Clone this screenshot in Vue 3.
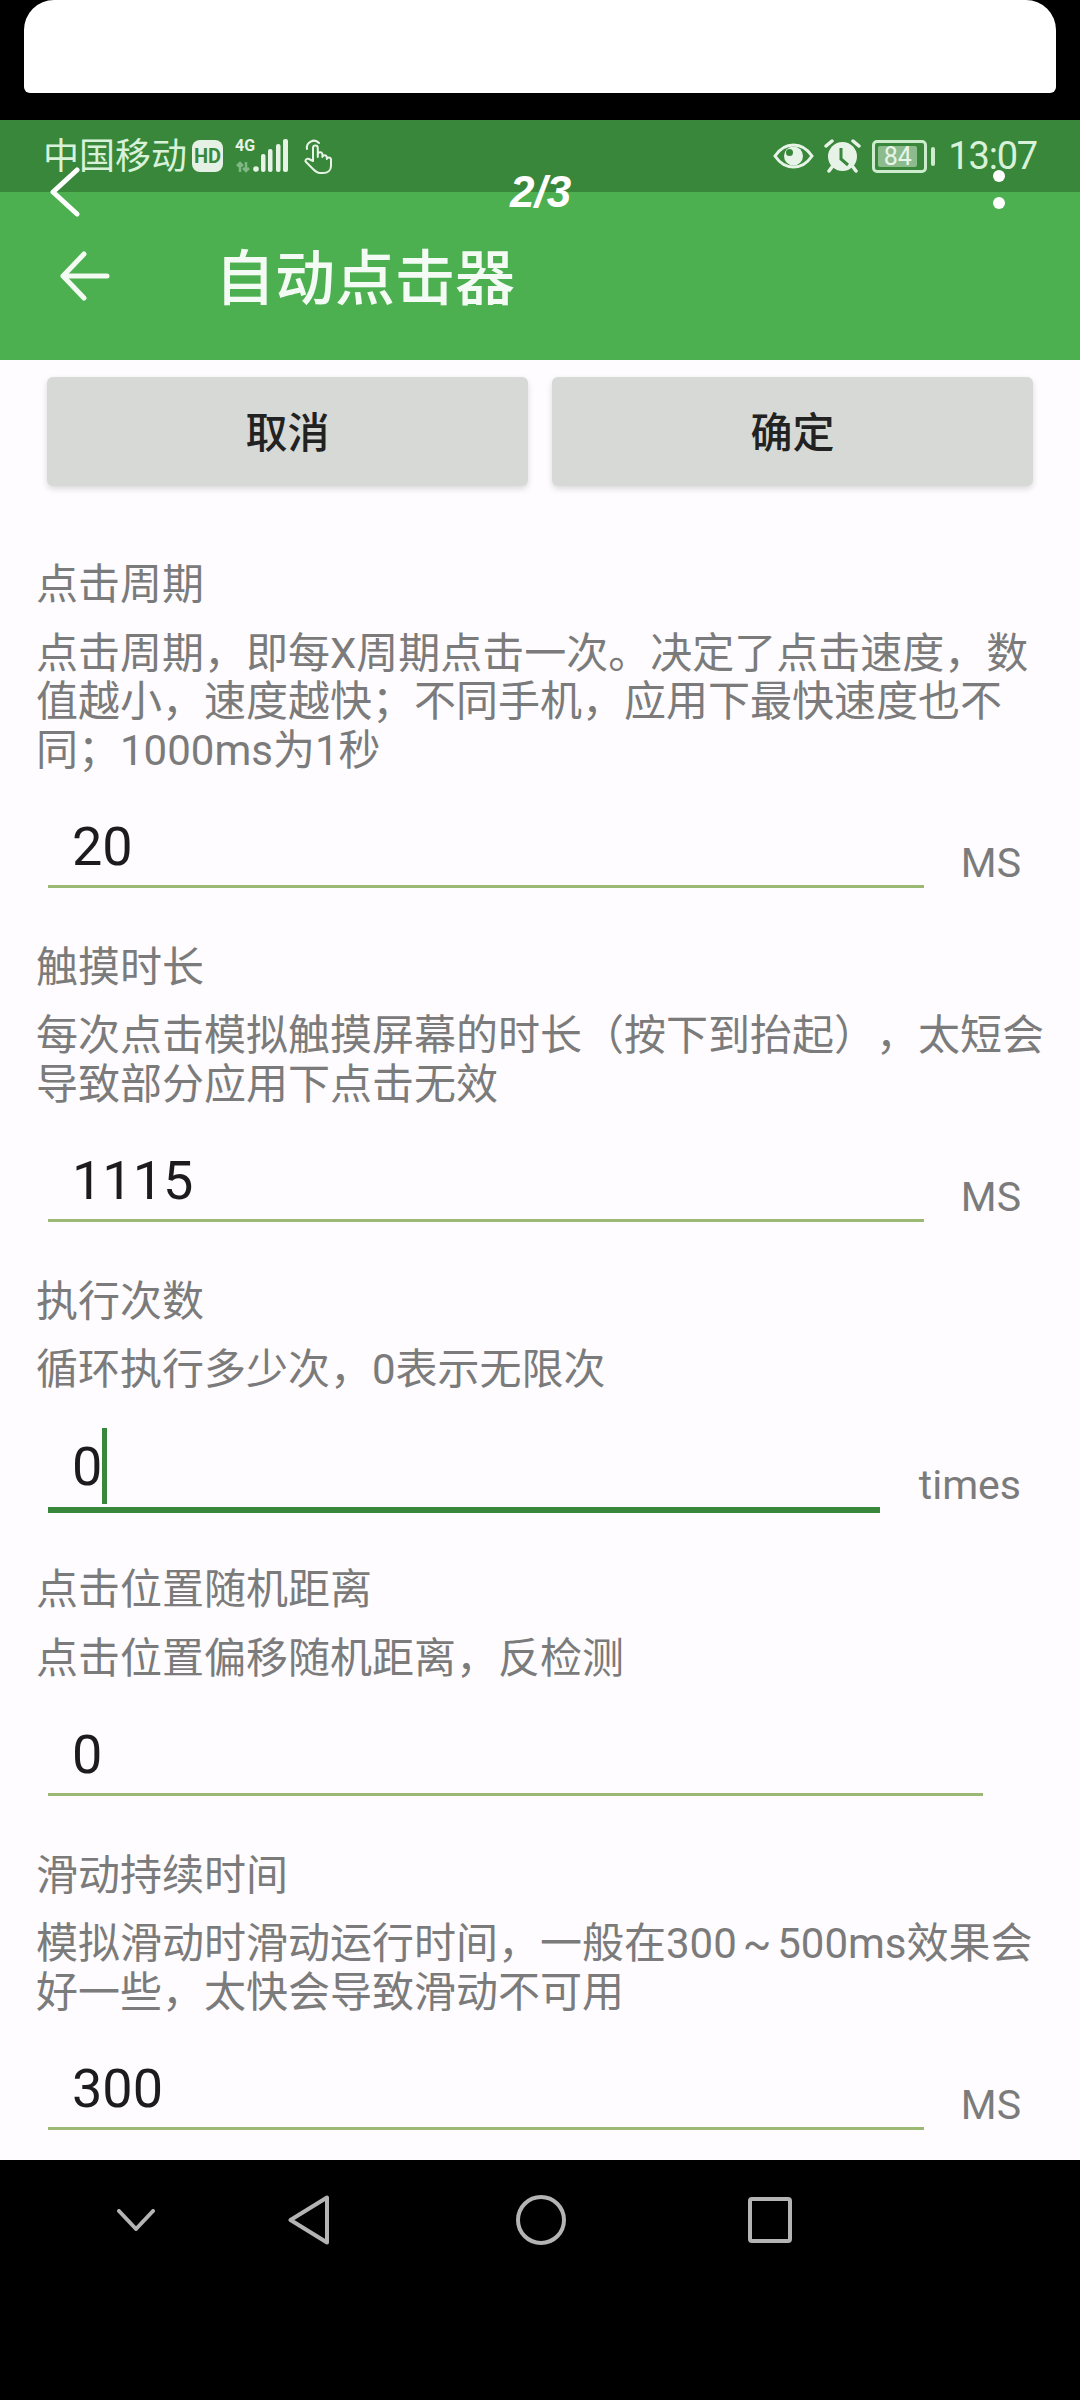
<template>
  <div class="screen">
    <div class="top-card"></div>

    <div class="phone">
      <div class="status-bar">
        <div class="status-left">
          <span class="carrier">中国移动</span>
          <span class="hd">HD</span>
          <div class="signal">
            <span class="net">4G</span>
            <svg class="bars" width="54" height="34" viewBox="0 0 54 34">
              <path d="M5 33v-9M2 27l3-3 3 3M11 23v9M8 29l3 3 3-3" fill="none" stroke="#7fb884" stroke-width="2.500" />
              <circle cx="21" cy="30" r="2.800" fill="#e6f3e6" />
              <rect x="26" y="15" width="4.500" height="18" rx="2" fill="#e6f3e6" />
              <rect x="33" y="10" width="4.500" height="23" rx="2" fill="#e6f3e6" />
              <rect x="41" y="5" width="4.500" height="28" rx="2" fill="#e6f3e6" />
              <rect x="48" y="0" width="5" height="33" rx="2" fill="#e6f3e6" />
            </svg>
          </div>
          <svg class="hand" width="30" height="38" viewBox="0 0 30 38" fill="none" stroke="#e6f3e6" stroke-width="2" stroke-linecap="round" stroke-linejoin="round">
            <path d="M4 12a7 7 0 0 1 12-6" />
            <path d="M10 24V11a2.400 2.400 0 0 1 4.800 0v9l0-3a2.400 2.400 0 0 1 4.600 0v3a2.300 2.300 0 0 1 4.400 0v2a2.200 2.200 0 0 1 4.200 0v7c0 4-3 7-8 7h-3c-3 0-5-2-7-4l-7-7c-1.600-2 1-4 3-3z" />
          </svg>
        </div>
        <div class="status-right">
          <svg width="41" height="26" viewBox="0 0 41 26">
            <path d="M2 13C7 5.500 13 2 20.500 2S34 5.500 39 13C34 20.500 28 24 20.500 24S7 20.500 2 13z" fill="none" stroke="#e6f3e6" stroke-width="3" />
            <circle cx="20.500" cy="13" r="9.500" fill="#e6f3e6" />
            <circle cx="16.500" cy="9.500" r="3.500" fill="#38873a" />
          </svg>
          <svg class="alarm" width="37" height="34" viewBox="0 0 37 34">
            <circle cx="18.500" cy="17.500" r="14.500" fill="#e6f3e6" />
            <path d="M17 9v11l7 6" fill="none" stroke="#38873a" stroke-width="3" />
            <path d="M2 7l6-5M35 7l-6-5" stroke="#e6f3e6" stroke-width="3.500" stroke-linecap="round" />
            <path d="M8 28l-3 4M29 28l3 4" stroke="#e6f3e6" stroke-width="3.500" stroke-linecap="round" />
          </svg>
          <div class="battery">
            <div class="battery-body"><span class="battery-num">84</span></div>
            <div class="battery-nub"></div>
          </div>
          <span class="clock">13:07</span>
        </div>
      </div>

      <div class="app-bar">
        <svg class="arrow" width="50" height="50" viewBox="0 0 50 50" fill="none" stroke="#f2faf2" stroke-width="5" stroke-linecap="round" stroke-linejoin="round">
          <path d="M47 25H3M24 3L3 25l21 22" />
        </svg>
        <h1 class="app-title">自动点击器</h1>
      </div>

      <div class="content">
        <div class="actions">
          <div class="action">取消</div>
          <div class="action">确定</div>
        </div>

        <div v-for="item in settings" :key="item.title" class="setting">
          <div class="setting-title">{{ item.title }}</div>
          <p class="setting-desc">{{ item.desc }}</p>
          <div class="input-row">
            <div class="field" :class="{ focused: item.focused }" :style="{ width: item.width + 'px' }">
              <span class="value">{{ item.value }}</span>
              <span v-if="item.focused" class="caret"></span>
            </div>
            <span v-if="item.unit" class="unit">{{ item.unit }}</span>
          </div>
        </div>
      </div>

      <div class="nav-bar">
        <svg class="nav-chevron" width="38" height="22" viewBox="0 0 38 22" fill="none" stroke="#b4b4b4" stroke-width="4" stroke-linecap="round" stroke-linejoin="round">
          <path d="M2 2l17 18L36 2" />
        </svg>
        <svg class="nav-back" width="42" height="50" viewBox="0 0 42 50" fill="none" stroke="#b4b4b4" stroke-width="4" stroke-linejoin="round">
          <path d="M39 2.500v45L2.500 25z" />
        </svg>
        <svg class="nav-home" width="50" height="50" viewBox="0 0 50 50" fill="none" stroke="#b4b4b4" stroke-width="4">
          <circle cx="25" cy="25" r="23" />
        </svg>
        <svg class="nav-recent" width="44" height="46" viewBox="0 0 44 46" fill="none" stroke="#b4b4b4" stroke-width="4" stroke-linejoin="round">
          <rect x="2" y="2" width="40" height="42" rx="2" />
        </svg>
      </div>
    </div>

    <!-- viewer controls lying over the screenshot -->
    <svg class="viewer-back" width="30" height="50" viewBox="0 0 30 50" fill="none" stroke="#fff" stroke-width="5" stroke-linecap="round" stroke-linejoin="round">
      <path d="M27 3L3 25l24 22" />
    </svg>
    <span class="viewer-count">2/3</span>
    <div class="viewer-dots">
      <span></span>
      <span></span>
    </div>
  </div>
</template>

<script setup>
const settings = [
  {
    title: '点击周期',
    desc: '点击周期，即每X周期点击一次。决定了点击速度，数值越小，速度越快；不同手机，应用下最快速度也不同；1000ms为1秒',
    value: '20',
    unit: 'MS',
    width: 876
  },
  {
    title: '触摸时长',
    desc: '每次点击模拟触摸屏幕的时长（按下到抬起），太短会导致部分应用下点击无效',
    value: '1115',
    unit: 'MS',
    width: 876
  },
  {
    title: '执行次数',
    desc: '循环执行多少次，0表示无限次',
    value: '0',
    unit: 'times',
    width: 832,
    focused: true
  },
  {
    title: '点击位置随机距离',
    desc: '点击位置偏移随机距离，反检测',
    value: '0',
    width: 935
  },
  {
    title: '滑动持续时间',
    desc: '模拟滑动时滑动运行时间，一般在300 ~ 500ms效果会好一些，太快会导致滑动不可用',
    value: '300',
    unit: 'MS',
    width: 876
  }
]
</script>

<style>
html,
body {
  margin: 0;
  background: #000;
}
</style>

<style scoped>
.screen {
  position: relative;
  width: 1080px;
  height: 2400px;
  background: #000;
  overflow: hidden;
  font-family: Roboto, 'Noto Sans CJK SC', sans-serif;
  text-spacing-trim: space-all;
}

.top-card {
  height: 93px;
  margin: 0 24px 27px;
  background: #fff;
  border-radius: 30px 30px 6px 6px;
}

.status-bar {
  height: 72px;
  background: #38873a;
  display: flex;
  justify-content: space-between;
  align-items: center;
  padding: 0 43px 0 43px;
  box-sizing: border-box;
}

.status-left,
.status-right {
  display: flex;
  align-items: center;
}

.carrier {
  margin-top: 2px;
  font-size: 36px;
  line-height: 40px;
  color: #d8f2d9;
}

.hd {
  width: 31px;
  height: 32px;
  margin-left: 5px;
  border-radius: 8px;
  background: #e6f1e6;
  color: #38873a;
  font-size: 20px;
  font-weight: 700;
  line-height: 32px;
  text-align: center;
}

.signal {
  position: relative;
  width: 54px;
  height: 34px;
  margin-left: 12px;
}

.net {
  position: absolute;
  left: 0;
  top: -1px;
  font-size: 16px;
  font-weight: 700;
  line-height: 16px;
  color: #e6f3e6;
}

.bars {
  display: block;
}

.hand {
  margin-left: 14px;
}

.alarm {
  margin-left: 10px;
}

.battery {
  display: flex;
  align-items: center;
  margin-left: 11px;
}

.battery-body {
  width: 55px;
  height: 33px;
  box-sizing: border-box;
  border: 3px solid #cdeccd;
  border-radius: 5px;
  padding: 3px;
  display: flex;
}

.battery-num {
  width: 39px;
  background: #8cbc8e;
  border-radius: 2px;
  color: #e8f5e8;
  font-size: 25px;
  line-height: 21px;
  text-align: center;
}

.battery-nub {
  width: 4px;
  height: 19px;
  margin-left: 4px;
  border-radius: 2px;
  background: #cdeccd;
}

.clock {
  margin-left: 13px;
  font-size: 38px;
  line-height: 40px;
  letter-spacing: -1.200px;
  color: #d8f2d9;
}

.app-bar {
  height: 168px;
  background: #4caf50;
  display: flex;
  align-items: center;
  padding-left: 60px;
  box-sizing: border-box;
}

.app-title {
  margin: 7px 0 0 105px;
  font-size: 60px;
  font-weight: 500;
  line-height: 70px;
  color: #f4fbf4;
}

.content {
  height: 1800px;
  overflow: hidden;
  background: #fefcff;
  padding: 17px 36px 0;
  box-sizing: border-box;
}

.actions {
  display: flex;
  gap: 24px;
  padding: 0 11px;
  margin-bottom: 73px;
}

.action {
  flex: 1;
  height: 109px;
  background: #d6d9d6;
  border-radius: 6px;
  box-shadow: 0 3px 6px rgba(0, 0, 0, 0.14);
  color: #222;
  font-size: 42px;
  font-weight: 500;
  line-height: 114px;
  text-align: center;
}

.setting {
  margin-bottom: 54px;
}

.setting-title {
  font-size: 42px;
  line-height: 51px;
  color: #7b7b7b;
}

.setting-desc {
  margin: 19.500px 0 0;
  font-size: 42px;
  line-height: 48.500px;
  word-spacing: -4.500px;
  color: #7b7b7b;
}

.input-row {
  display: flex;
  justify-content: space-between;
  align-items: flex-end;
  margin-left: 12px;
  padding-right: 23px;
}

.field {
  display: flex;
  align-items: flex-start;
  padding: 40px 0 5.500px 24px;
  box-sizing: border-box;
  border-bottom: 3px solid #9bb974;
}

.field.focused {
  padding-bottom: 8.500px;
  margin-bottom: -3px;
  border-bottom: 6px solid #38873a;
}

.value {
  font-size: 54px;
  line-height: 64px;
  color: #1c1c1c;
}

.caret {
  width: 5px;
  height: 76px;
  margin: -7px 0 -12px 0;
  background: #38873a;
}

.unit {
  margin-bottom: 1px;
  font-size: 41px;
  line-height: 48px;
  color: #7b7b7b;
}

.nav-bar {
  height: 240px;
  background: #000;
  display: flex;
  align-items: flex-start;
  padding: 35px 0 0 117px;
  box-sizing: border-box;
}

.nav-chevron {
  margin-top: 14px;
}

.nav-back {
  margin-left: 133px;
}

.nav-home {
  margin-left: 186px;
}

.nav-recent {
  margin: 2px 0 0 182px;
}

.viewer-back {
  position: absolute;
  left: 50px;
  top: 167px;
}

.viewer-count {
  position: absolute;
  left: 510px;
  top: 168px;
  font-family: 'Liberation Sans', sans-serif;
  font-size: 44px;
  font-style: italic;
  font-weight: 700;
  line-height: 48px;
  color: #fff;
}

.viewer-dots {
  position: absolute;
  left: 993px;
  top: 170px;
  display: flex;
  flex-direction: column;
  gap: 15px;
}

.viewer-dots span {
  width: 12px;
  height: 12px;
  border-radius: 50%;
  background: #fff;
}
</style>
